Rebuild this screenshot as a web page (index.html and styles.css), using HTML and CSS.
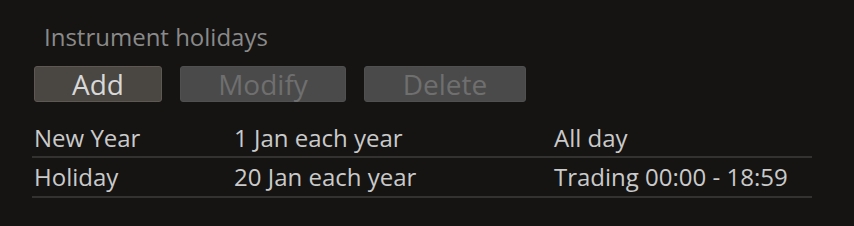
FILE: index.html
```html
<!DOCTYPE html>
<html>
<head>
<meta charset="utf-8">
<link rel="stylesheet" href="styles.css">
</head>
<body>
<div class="panel">
  <div class="title">Instrument holidays</div>
  <div class="buttons">
    <button class="btn btn-active btn-add">Add</button>
    <button class="btn btn-disabled btn-modify">Modify</button>
    <button class="btn btn-disabled btn-delete">Delete</button>
  </div>
  <div class="table">
    <div class="row">
      <div class="c1">New Year</div>
      <div class="c2">1 Jan each year</div>
      <div class="c3">All day</div>
    </div>
    <div class="row">
      <div class="c1">Holiday</div>
      <div class="c2">20 Jan each year</div>
      <div class="c3">Trading 00:00 - 18:59</div>
    </div>
  </div>
</div>
</body>
</html>
```

FILE: styles.css
```css
html, body {
  margin: 0;
  padding: 0;
  background: #151413;
  width: 854px;
  height: 226px;
  overflow: hidden;
}
body {
  font-family: "Open Sans", "Noto Sans", sans-serif;
  color: #cacaca;
}
.panel {
  padding: 22px 0 0 32px;
  width: 780px;
}
.title {
  font-size: 24px;
  line-height: 30px;
  color: #8a8a8a;
  padding-left: 12px;
}
.buttons {
  display: flex;
  gap: 18px;
  margin-top: 14px;
  padding-left: 2px;
}
.btn {
  font-family: "Open Sans", "Noto Sans", sans-serif;
  font-size: 28px;
  height: 36px;
  line-height: 32px;
  padding: 0;
  border-radius: 3px;
  box-sizing: border-box;
}
.btn-active {
  background: #4a4642;
  border: 1px solid #5e5853;
  color: #d8d8d8;
}
.btn-disabled {
  background: #4a4a4a;
  border: 1px solid #505050;
  color: #6f6f6f;
}
.btn-add { width: 128px; }
.btn-modify { width: 166px; }
.btn-delete { width: 162px; }
.table {
  margin-top: 18px;
}
.row {
  display: grid;
  grid-template-columns: 200px 320px 1fr;
  height: 40px;
  align-items: center;
  border-bottom: 2px solid #333231;
  font-size: 24px;
  padding: 0 0 2px 2px;
  box-sizing: border-box;
}
.row:first-child {
  height: 38px;
}
```
